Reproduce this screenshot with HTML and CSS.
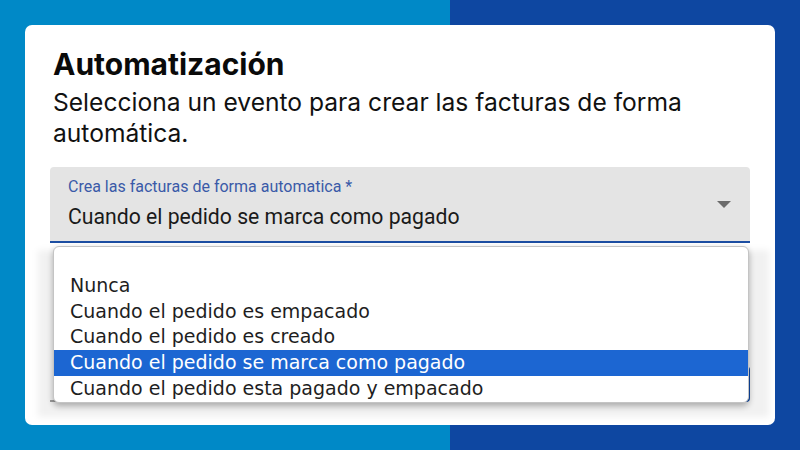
FILE: index.html
```html
<!DOCTYPE html>
<html lang="es">
<head>
<meta charset="utf-8">
<title>Automatización</title>
<link rel="stylesheet" href="styles.css">
</head>
<body>
<div class="card">
  <h1 class="title">Automatización</h1>
  <p class="subtitle">Selecciona un evento para crear las facturas de forma automática.</p>
  <div class="field">
    <div class="label">Crea las facturas de forma automatica *</div>
    <div class="value">Cuando el pedido se marca como pagado</div>
    <svg class="arrow" width="14" height="7" viewBox="0 0 14 7"><path d="M0 0 L14 0 L7 7 Z" fill="#6b6b6b"/></svg>
  </div>
  <div class="row">
    <div class="line"></div>
    <div class="button"></div>
  </div>
  <div class="shade"></div>
  <ul class="menu">
    <li class="opt blank"></li>
    <li class="opt">Nunca</li>
    <li class="opt">Cuando el pedido es empacado</li>
    <li class="opt">Cuando el pedido es creado</li>
    <li class="opt sel">Cuando el pedido se marca como pagado</li>
    <li class="opt">Cuando el pedido esta pagado y empacado</li>
  </ul>
</div>
</body>
</html>
```
FILE: styles.css
```css
html, body {
  margin: 0;
  padding: 0;
}
body {
  width: 800px;
  height: 450px;
  background: linear-gradient(90deg, #0089c7 0, #0089c7 450px, #0e47a1 450px, #0e47a1 100%);
  padding-top: 25px;
  box-sizing: border-box;
  overflow: hidden;
}
.card {
  position: relative;
  margin-left: 25px;
  width: 750px;
  height: 400px;
  box-sizing: border-box;
  background: #fff;
  border-radius: 7px;
  padding: 21px 25px 0 25px;
}
.title {
  margin: 0 0 0 3px;
  font-family: Inter, "Liberation Sans", sans-serif;
  font-weight: 700;
  font-size: 30px;
  line-height: 36px;
  color: #0a0a0a;
}
.subtitle {
  margin: 5px 0 0 3px;
  font-family: Inter, "Liberation Sans", sans-serif;
  font-size: 24.6px;
  line-height: 31px;
  color: #111;
  width: 680px;
}
.field {
  position: relative;
  margin-top: 18px;
  background: #e4e4e4;
  border-radius: 4px 4px 0 0;
  border-bottom: 2px solid #1c4ea2;
  padding: 10px 18px 0 18px;
  box-sizing: content-box;
  height: 64px;
}
.label {
  font-family: Roboto, sans-serif;
  font-size: 16px;
  line-height: 20px;
  color: #3a5aa8;
}
.value {
  margin-top: 7px;
  font-family: Roboto, sans-serif;
  font-size: 21.2px;
  line-height: 26px;
  color: #1a1a1a;
}
.arrow {
  position: absolute;
  right: 19px;
  top: 34px;
}
.row {
  position: relative;
  z-index: 1;
  display: flex;
  align-items: flex-end;
  gap: 22px;
  margin-top: 123px;
  height: 36px;
}
.line {
  width: 560px;
  height: 2px;
  background: #9a9a9a;
}
.button {
  width: 118px;
  height: 36px;
  background: #0e47a1;
  border-radius: 4px;
}
.shade {
  position: absolute;
  left: 13px;
  top: 225px;
  width: 731px;
  height: 167px;
  background: rgba(0, 0, 0, 0.055);
  filter: blur(3px);
  z-index: 0;
}
.menu {
  position: absolute;
  z-index: 2;
  left: 28px;
  top: 221px;
  width: 696px;
  margin: 0;
  padding: 0;
  list-style: none;
  background: #fff;
  border: 1px solid #c4c4c4;
  border-radius: 6px;
  box-shadow: 0 3px 6px rgba(0, 0, 0, 0.3);
  box-sizing: border-box;
  overflow: hidden;
}
.opt {
  height: 25.8px;
  line-height: 25.8px;
  padding-left: 16px;
  font-family: "DejaVu Sans", sans-serif;
  font-size: 19px;
  color: #1e1e1e;
  white-space: nowrap;
}
.opt.sel {
  background: #1c66d2;
  color: #fff;
}
```
